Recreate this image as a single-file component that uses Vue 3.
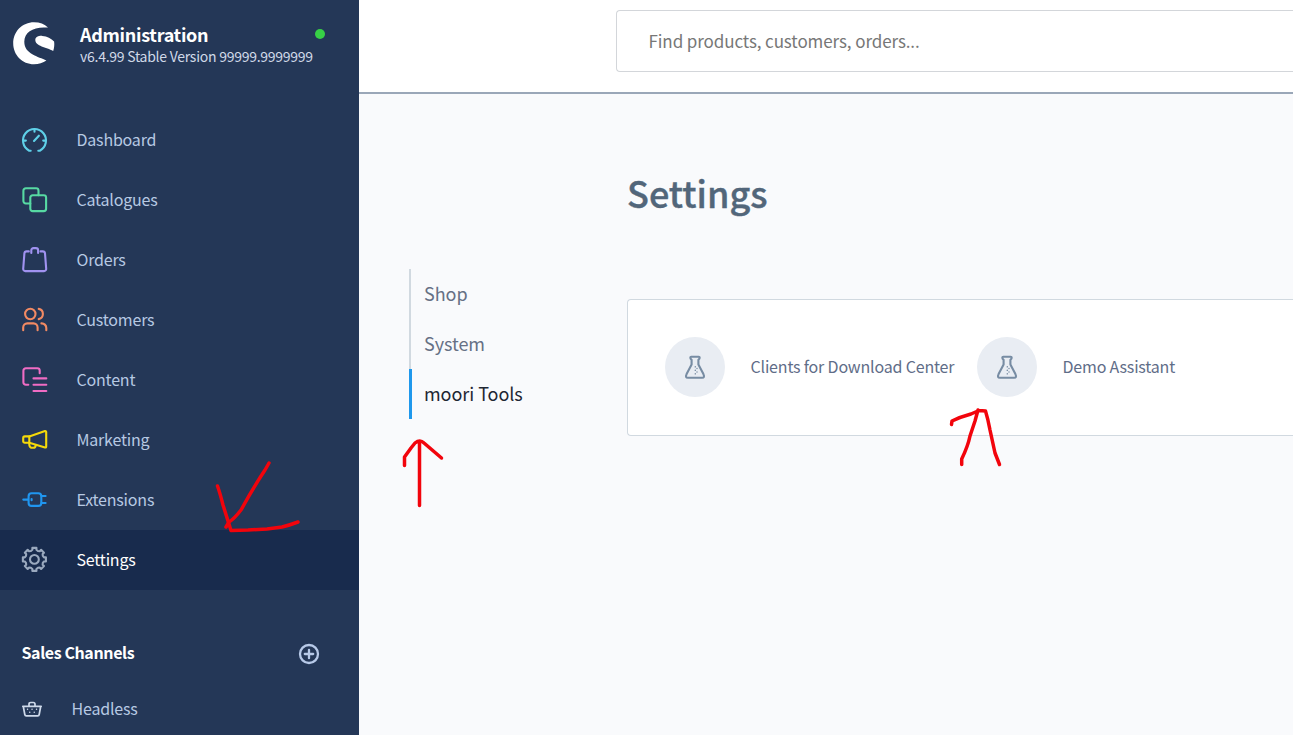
<script setup>
const nav = [
  { id: 'dashboard', label: 'Dashboard', color: '#5fd0e8', paths: ['M9.7 24.7H8.2A11.5 11.5 0 1 1 18.8 24.7H17.3', 'M2.3 14.6h2.6M22.2 14.6h2.6M13.5 3v2.8M13 15l4.9-5.3'] },
  { id: 'catalogues', label: 'Catalogues', color: '#57d9a3', paths: ['M9.3 17.5H4.8a2.4 2.4 0 0 1-2.4-2.4V4.7a2.4 2.4 0 0 1 2.4-2.4h10.3a2.4 2.4 0 0 1 2.4 2.4v4.6', 'M11.7 9.2h11a2.4 2.4 0 0 1 2.4 2.4v11.1a2.4 2.4 0 0 1-2.4 2.4h-11a2.4 2.4 0 0 1-2.4-2.4V11.6a2.4 2.4 0 0 1 2.4-2.4z'] },
  { id: 'orders', label: 'Orders', color: '#a092f0', paths: ['M7.8 5.4H5.6a2.2 2.2 0 0 0-2.2 2L2.2 22.8a2.1 2.1 0 0 0 2.1 2.3h18.8a2.1 2.1 0 0 0 2.1-2.3L24 7.4a2.2 2.2 0 0 0-2.2-2h-2.3', 'M10.3 7V4.3a2.2 2.2 0 0 1 2.2-2.2h2.4a2.2 2.2 0 0 1 2.2 2.2V7'] },
  { id: 'customers', label: 'Customers', color: '#f28a63', paths: ['M14.5 8a5.2 5.2 0 1 1-10.4 0a5.2 5.2 0 1 1 10.4 0', 'M17.7 2.9a5.2 5.2 0 0 1 0 10.2M2.2 24.3v-2.8a4.1 4.1 0 0 1 4.1-4.1h6.2a4.1 4.1 0 0 1 4.1 4.1v2.8M20.4 17.4a4.6 4.6 0 0 1 4.9 4.6v2.3'] },
  { id: 'content', label: 'Content', color: '#f06cc4', paths: ['M7.3 18.8H4.8a2.4 2.4 0 0 1-2.4-2.4V4.7a2.4 2.4 0 0 1 2.4-2.4h11.5a2.4 2.4 0 0 1 2.4 2.4v2.6', 'M12.5 12.4h12.8M12.5 18.8h12.8M12.5 25h12.8'] },
  { id: 'marketing', label: 'Marketing', color: '#f5d90a', paths: ['M8.3 10.4H3.8a1.6 1.6 0 0 0-1.6 1.6v3.2a1.6 1.6 0 0 0 1.6 1.6h4.5z', 'M8.3 10.4L24 5.1q1.2-.3 1.2 1v14.4q0 1.3-1.2 1L8.3 16.8', 'M8.3 17.2v1.6a3 3 0 0 0 3 3h.8a2.6 2.6 0 0 0 2.6-2.6'] },
  { id: 'extensions', label: 'Extensions', color: '#2096f0', paths: ['M2.3 13.6h5M10.6 7.3h6.7a3 3 0 0 1 3 3v6.6a3 3 0 0 1-3 3h-6.7a3 3 0 0 1-3-3v-6.6a3 3 0 0 1 3-3z', 'M20.6 10h4M20.6 17h4M10.6 13v1.2'] },
  { id: 'settings', label: 'Settings', color: '#9aa9be', active: true, paths: [gearPath(), 'M17.8 13.4a4.4 4.4 0 1 1-8.8 0a4.4 4.4 0 1 1 8.8 0'] },
]

function gearPath() {
  const at = (deg, r) => {
    const a = (deg * Math.PI) / 180
    return `${(13.4 + r * Math.sin(a)).toFixed(2)} ${(13.4 - r * Math.cos(a)).toFixed(2)}`
  }
  let d = ''
  for (let i = 0; i < 8; i++) {
    const c = i * 45
    d += `${i ? 'L' : 'M'}${at(c - 12, 9.8)}L${at(c - 10, 11.7)}L${at(c + 10, 11.7)}L${at(c + 12, 9.8)}L${at(c + 22.5, 9.1)}`
  }
  return d + 'Z'
}

const tabs = [
  { label: 'Shop' },
  { label: 'System' },
  { label: 'moori Tools', active: true },
]

const tools = ['Clients for Download Center', 'Demo Assistant']
</script>

<template>
  <div class="app">
    <aside class="sidebar">
      <header class="brand">
        <svg class="logo" viewBox="0 0 42 43">
          <path d="M35 5.6C31.5 2 26.8.2 21 .2 9.3.2.2 9.5.2 21.3.2 33.2 9.3 42.3 21 42.3c4.7 0 9-1.3 12.4-3.7C25.5 34.5 11.3 32.3 11.3 19.8 11.3 9.6 21 4.3 35 5.6Z" />
          <path d="M22.3 17.8C22.4 14.8 26 13.6 29.3 13.9 34.2 14.2 38.2 16.6 41.1 19.6 41.6 23 41.2 26 40.2 29.1 33.5 25 22.2 24.5 22.3 17.8Z" />
        </svg>
        <div class="brand-text">
          <div class="brand-name">Administration</div>
          <div class="brand-version">v6.4.99 Stable Version 99999.9999999</div>
        </div>
        <span class="status"></span>
      </header>

      <nav class="nav">
        <a v-for="item in nav" :key="item.id" class="nav-item" :class="{ active: item.active }">
          <svg class="nav-icon" viewBox="0 0 28 28" :stroke="item.color">
            <path v-for="p in item.paths" :key="p" :d="p" />
          </svg>
          <span class="nav-label">{{ item.label }}</span>
        </a>
      </nav>

      <div class="channels-head">
        <span class="channels-title">Sales Channels</span>
        <svg class="plus" viewBox="0 0 22 22">
          <circle cx="11" cy="11" r="9" />
          <path d="M11 6.8v8.4M6.8 11h8.4" />
        </svg>
      </div>
      <a class="channel">
        <svg class="basket" viewBox="0 0 22 18">
          <path d="M1.8 6.3h18.4M2.3 6.5l1.5 8q.2 1.3 1.5 1.3h11.4q1.3 0 1.5-1.3l1.5-8" />
          <path d="M8 6V4.2q0-1.7 1.7-1.7h2.6q1.700 0 1.7 1.7V6" />
          <path class="dots" d="M6.5 9.3h.1M11 9.3h.1M15.5 9.3h.1M8.7 12.3h.1M13.2 12.3h.1" />
        </svg>
        <span class="channel-label">Headless</span>
      </a>
    </aside>

    <main class="main">
      <header class="topbar">
        <div class="search"><span>Find products, customers, orders...</span></div>
      </header>
      <div class="content">
        <ul class="tabs">
          <li v-for="tab in tabs" :key="tab.label" class="tab" :class="{ active: tab.active }">
            <span>{{ tab.label }}</span>
          </li>
        </ul>
        <section class="panel">
          <h1 class="title"><span>Settings</span></h1>
          <div class="card">
            <a v-for="tool in tools" :key="tool" class="tool">
              <span class="tool-icon">
                <svg viewBox="0 0 22 26">
                  <path d="M7.3 2.7h7.4q1 0 1 1.100t-1.300 2V10.500l5 9.600q1.700 3.600-1.300 3.600H3.900q-3 0-1.300-3.600l5-9.600V5.800Q6.300 4.900 6.300 3.800t1-1.100z" />
                  <path class="dots" d="M11.300 12.800v.1M11.300 16.300v.1M11.300 19.800v.1M13 14.500v.1M13 18v.1" />
                </svg>
              </span>
              <span class="tool-label">{{ tool }}</span>
            </a>
          </div>
        </section>
      </div>
    </main>

    <svg class="marks" viewBox="0 0 1293 735">
      <path d="M269 463L265 470Q253 488 241 510Q234 519 229 522L226 527" />
      <path d="M217.5 486Q220 493 223 505L231 530.5L248 530L267 529L282 527Q290 525 298 522" />
      <path d="M419.5 505.5V442M404.5 465.5V457L411 448L415 443Q420 439 424 443L441.5 458" />
      <path d="M951.5 424.5L952 421Q960 417 971 414L979 410.5L985.5 411Q988 419 990 430L995 453L999.5 464.5M961.7 464.5V459Q968 446 970 436L975 421L978 410" />
    </svg>
  </div>
</template>

<style scoped>
.app {
  position: relative;
  display: flex;
  width: 1293px;
  height: 735px;
  overflow: hidden;
  font-family: "Noto Sans CJK SC", "Noto Sans", sans-serif;
  background: #f9fafc;
  white-space: nowrap;
}
svg { flex: none; display: block; }
.sidebar {
  flex: none;
  width: 359px;
  box-sizing: border-box;
  background: #243757;
  color: #b7c9e3;
}
.brand {
  display: flex;
  height: 110px;
  padding: 22px 34px 0 13px;
  box-sizing: border-box;
}
.logo { width: 42px; height: 43px; fill: #fff; }
.brand-text { width: 235px; margin-left: 25px; padding-top: 1px; }
.brand-name { font-size: 18px; line-height: 22px; font-weight: 700; letter-spacing: -0.3px; color: #fff; }
.brand-version { font-size: 14px; line-height: 22px; letter-spacing: -0.26px; color: #d0d9e8; }
.status { flex: none; width: 10px; height: 10px; margin-top: 7px; border-radius: 50%; background: #37d046; }
.nav-item { display: flex; align-items: center; height: 60px; padding-left: 21px; }
.nav-item.active { background: #182b4d; color: #fff; }
.nav-icon, .tool-icon svg, .plus, .basket { fill: none; stroke-linecap: round; stroke-linejoin: round; }
.nav-icon { width: 28px; height: 28px; stroke-width: 2.1; }
.nav-label { margin-left: 27.5px; padding-bottom: 2px; font-size: 16px; line-height: 24px; letter-spacing: -0.2px; }
.channels-head {
  display: flex;
  align-items: center;
  justify-content: space-between;
  height: 26px;
  margin-top: 51px;
  padding: 0 38.6px 0 21.5px;
}
.channels-title { padding-bottom: 4px; font-size: 16px; line-height: 22px; font-weight: 700; letter-spacing: -0.4px; color: #fff; }
.plus { width: 22px; height: 22px; stroke: #b7c9e8; stroke-width: 2.3; }
.channel { display: flex; align-items: center; height: 26px; margin-top: 29px; padding-left: 21px; }
.basket { width: 22px; height: 18px; stroke: #ced9ea; stroke-width: 1.7; }
.channel-label { margin-left: 28.6px; padding-bottom: 2px; font-size: 16px; line-height: 24px; letter-spacing: -0.2px; }
.main { flex: 1; min-width: 0; }
.topbar { height: 94px; box-sizing: border-box; padding: 10px 0 0 257px; background: #fff; border-bottom: 2px solid #9aa7b8; }
.search {
  height: 62px;
  box-sizing: border-box;
  padding-left: 31.5px;
  border: 1px solid #d3d6da;
  border-right: 0;
  border-radius: 4px 0 0 4px;
  font-size: 17px;
  line-height: 59px;
  letter-spacing: -0.1px;
  color: #777;
}
.content { display: flex; }
.tabs { flex: none; width: 218px; margin: 175px 0 0 50px; padding: 0; list-style: none; }
.tab { height: 50px; box-sizing: border-box; padding-left: 13px; border-left: 2px solid #d1d9e0; font-size: 18px; line-height: 48px; letter-spacing: -0.05px; color: #667085; }
.tab.active { padding-left: 12px; border-left: 3px solid #1f98ec; color: #1f2733; }
.panel { flex: 1; min-width: 0; }
.title { margin: 72px 0 0; height: 133px; font-size: 36px; line-height: 52px; font-weight: 500; color: #52667a; -webkit-text-stroke: 0.4px #52667a; }
.card {
  display: flex;
  height: 137px;
  box-sizing: border-box;
  padding: 37px 0 0 37px;
  background: #fff;
  border: 1px solid #d1d9e0;
  border-right: 0;
  border-radius: 4px 0 0 4px;
}
.tool { display: flex; align-items: center; width: 312px; height: 60px; color: #5f6d88; }
.tool-icon { flex: none; display: flex; align-items: center; justify-content: center; width: 60px; height: 60px; border-radius: 50%; background: #e9edf3; }
.tool-icon svg { width: 22px; height: 26px; stroke: #778ca3; stroke-width: 2.1; }
.tool-label { margin-left: 25.5px; padding-bottom: 2px; font-size: 16px; line-height: 24px; letter-spacing: -0.18px; }
.tool-icon .dots, .dots { stroke-width: 1.4; }
.marks { position: absolute; inset: 0; width: 1293px; height: 735px; fill: none; stroke: #f2040c; stroke-width: 3.5; stroke-linecap: round; stroke-linejoin: round; pointer-events: none; }
</style>
